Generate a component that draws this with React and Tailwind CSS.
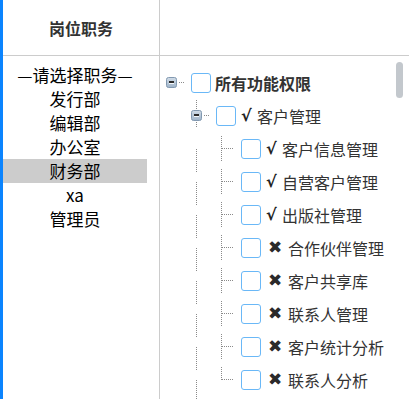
import React from 'react';

// Left list of posts, one item is selected
const posts = ['—请选择职务—', '发行部', '编辑部', '办公室', '财务部', 'xa', '管理员'];
const selected = '财务部';

// Children of 客户管理, granted (ok) or not
const modules = [
  { ok: true, name: '客户信息管理' },
  { ok: true, name: '自营客户管理' },
  { ok: true, name: '出版社管理' },
  { ok: false, name: '合作伙伴管理' },
  { ok: false, name: '客户共享库' },
  { ok: false, name: '联系人管理' },
  { ok: false, name: '客户统计分析' },
  { ok: false, name: '联系人分析' },
];

const DOT = { stroke: '#8a8a8a', strokeWidth: 1, strokeDasharray: '1 1', shapeRendering: 'crispEdges' };

const Toggle = () => (
  <g>
    <defs>
      <linearGradient id="tg" x1="0" y1="0" x2="0" y2="1">
        <stop offset="0" stopColor="#d2dde8" />
        <stop offset="1" stopColor="#9fb4c9" />
      </linearGradient>
    </defs>
    <rect x="0.5" y="11.5" width="10" height="10" rx="2" fill="url(#tg)" stroke="#8299b1" />
    <line x1="3" y1="16" x2="8" y2="16" stroke="#2b2b2b" strokeWidth="2" />
    <line x1="3" y1="17.5" x2="8" y2="17.5" stroke="#f4f7fa" strokeWidth="1" />
  </g>
);

const Checkbox = () => (
  <span className="block w-[20px] h-[20px] shrink-0 rounded-[3px] border border-[#6ab8f7] bg-white" />
);

const Mark = ({ ok }) =>
  ok ? (
    <span className="ml-[5px] w-[16px] font-bold text-[#222] font-['DejaVu_Sans',sans-serif]">√</span>
  ) : (
    <span className="ml-[7px] w-[20px] text-[17px] leading-none text-[#2a2a2a] font-['DejaVu_Sans',sans-serif]">✖</span>
  );

export default function App() {
  return (
    <div className="flex w-[409px] h-[399px] bg-white overflow-hidden font-['Noto_Sans_CJK_SC',sans-serif]">
      <div className="w-[3px] shrink-0 bg-[#0b84fe]" />

      {/* Posts column */}
      <div className="w-[157px] shrink-0 flex flex-col border-r border-[#cccccc]">
        <div className="h-[56px] shrink-0 flex items-center justify-center border-b border-[#cccccc] text-[16px] font-bold text-[#333]">
          岗位职务
        </div>
        <ul className="w-[144px] pt-[7px] text-[17px] text-black">
          {posts.map((p) => (
            <li
              key={p}
              className={`h-[24px] leading-[24px] text-center ${p === selected ? 'bg-[#cccccc]' : ''}`}
            >
              {p}
            </li>
          ))}
        </ul>
      </div>

      {/* Permission tree */}
      <div className="flex-1 flex flex-col">
        <div className="h-[56px] shrink-0 border-b border-[#cccccc]" />
        <div className="relative flex-1 overflow-hidden pt-[10px] pl-[6px] text-[16px] text-[#333]">
          <div className="flex items-center h-[33px]">
            <svg width="25" height="33" className="shrink-0">
              <Toggle />
              <line x1="13" y1="16.5" x2="18" y2="16.5" style={DOT} />
            </svg>
            <Checkbox />
            <span className="ml-[4px] font-bold">所有功能权限</span>
          </div>

          <div className="flex items-center h-[33px] pl-[25px]">
            <svg width="25" height="33" className="shrink-0">
              <line x1="5.5" y1="1" x2="5.5" y2="11" style={DOT} />
              <line x1="5.5" y1="23" x2="5.5" y2="29" style={DOT} />
              <Toggle />
              <line x1="13" y1="16.5" x2="18" y2="16.5" style={DOT} />
            </svg>
            <Checkbox />
            <Mark ok />
            <span>客户管理</span>
          </div>

          {modules.map((m, i) => {
            const last = i === modules.length - 1;
            return (
              <div key={m.name} className="flex items-center h-[33px] pl-[25px]">
                <svg width="50" height="33" className="shrink-0 overflow-visible">
                  <line x1="5.5" y1="16.5" x2="5.5" y2="39.5" style={DOT} />
                  <line x1="30.5" y1="3.5" x2="30.5" y2={last ? 16.5 : 28.5} style={DOT} />
                  <line x1="31" y1="16.5" x2="42" y2="16.5" style={DOT} />
                </svg>
                <Checkbox />
                <Mark ok={m.ok} />
                <span>{m.name}</span>
              </div>
            );
          })}

          {/* overlay scrollbar thumb */}
          <div className="absolute top-[6px] right-[6px] w-[7px] h-[36px] rounded-full bg-[#c3c8cd]" />
        </div>
      </div>
    </div>
  );
}
